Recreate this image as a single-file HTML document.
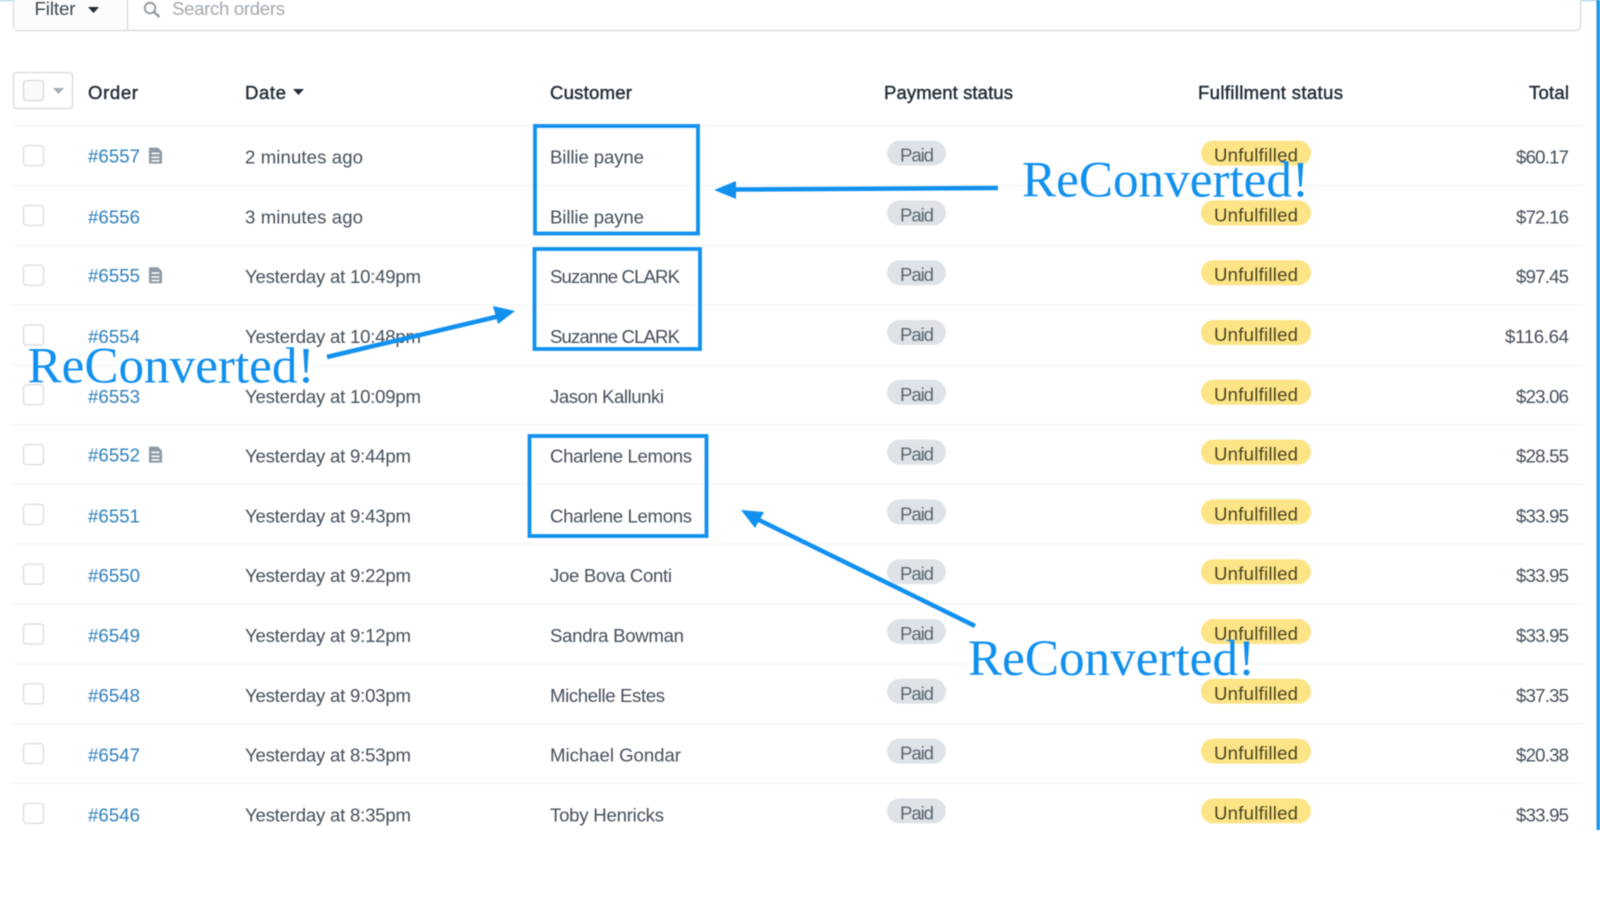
<!DOCTYPE html>
<html lang="en"><head><meta charset="utf-8"><title>Orders</title>
<style>
html,body{margin:0;padding:0;background:#fff;width:1600px;height:900px;overflow:hidden}
svg{display:block;filter:blur(.45px)}
text{font-family:"Liberation Sans",sans-serif;font-size:18.6px;fill:#454f5b}
.h{fill:#212b36;stroke:#212b36;stroke-width:.4}
.l{fill:#2f7fbc}
.p{fill:#5c6670}
.u{fill:#4a4520}
.a{font-family:"Liberation Serif",serif;font-size:51px;fill:#1190ee}
.c{fill:#fff;stroke:#dcdfe2;stroke-width:1.4}
.pp{fill:#dfe3e8}
.up{fill:#fde487}
.ln{stroke:#f3f4f6;stroke-width:1.2}
.f{fill:#8f9aa5}
</style></head><body>
<svg width="1600" height="900" viewBox="0 0 1600 900" xmlns="http://www.w3.org/2000/svg">
<rect width="1600" height="900" fill="#fff"/>
<rect x="0" y="0" width="1600" height="1.2" fill="#a8d4f0"/>
<rect x="1596.500" y="0" width="3.500" height="830" fill="#1b95ea"/>
<rect x="13.500" y="-10" width="1567" height="40.500" rx="4" fill="#fff" stroke="#d5d8dc" stroke-width="1.200"/>
<rect x="14" y="-10" width="113" height="40" fill="#fcfcfc"/>
<line x1="127.500" y1="0" x2="127.500" y2="30" stroke="#d5d8dc" stroke-width="1.200"/>
<text x="34.500" y="15" textLength="41" style="fill:#3c4650">Filter</text>
<path d="M88 7h11l-5.500 6z" fill="#212b36"/>
<circle cx="150" cy="8" r="5.300" fill="none" stroke="#8d97a1" stroke-width="1.800"/>
<path d="M154 12l5.500 5" stroke="#8d97a1" stroke-width="2.200" fill="none"/>
<text x="172" y="15" textLength="113" style="fill:#a3a9af">Search orders</text>

<rect x="13.500" y="72.500" width="59" height="36" rx="3" fill="#fff" stroke="#d6d9dd" stroke-width="1.300"/>
<rect x="23.500" y="80.500" width="20" height="20" rx="3" fill="#f9fafa" stroke="#d6d9dd" stroke-width="1.300"/>
<path d="M53 88h11l-5.500 6z" fill="#a4abb2"/>
<text class="h" x="88" y="99" textLength="50">Order</text>
<text class="h" x="245" y="99" textLength="41">Date</text>
<path d="M293 89h11l-5.500 6z" fill="#212b36"/>
<text class="h" x="550" y="99" textLength="82">Customer</text>
<text class="h" x="884" y="99" textLength="129">Payment status</text>
<text class="h" x="1198" y="99" textLength="145">Fulfillment status</text>
<text class="h" x="1529" y="99" textLength="40">Total</text>

<g transform="translate(0 .6)">
<g><line class="ln" x1="13" y1="125" x2="1583" y2="125"/><rect class="c" x="23.500" y="145" width="20" height="20" rx="3"/><text class="l" x="88" y="162" textLength="52">#6557</text><path class="f" d="M149 147h9l4 4v12h-13zM151.500 152v1.500h8V152zM151.500 156v1.500h8V156zM151.500 159.500v1.500h8v-1.500z" fill-rule="evenodd"/><text x="245" y="163" textLength="118">2 minutes ago</text><text x="550" y="163" textLength="94">Billie payne</text><rect class="pp" x="887" y="140" width="59" height="25" rx="12.500"/><text class="p" x="900" y="161" textLength="34">Paid</text><rect class="up" x="1201" y="140" width="110" height="25" rx="12.500"/><text class="u" x="1214" y="161" textLength="84">Unfulfilled</text><text x="1516" y="163" textLength="53">$60.17</text></g>

<g transform="translate(0 59.8)"><line class="ln" x1="13" y1="125" x2="1583" y2="125"/><rect class="c" x="23.500" y="145" width="20" height="20" rx="3"/><text class="l" x="88" y="163" textLength="52">#6556</text><text x="245" y="163" textLength="118">3 minutes ago</text><text x="550" y="163" textLength="94">Billie payne</text><rect class="pp" x="887" y="140" width="59" height="25" rx="12.500"/><text class="p" x="900" y="161" textLength="34">Paid</text><rect class="up" x="1201" y="140" width="110" height="25" rx="12.500"/><text class="u" x="1214" y="161" textLength="84">Unfulfilled</text><text x="1516" y="163" textLength="53">$72.16</text></g>

<g transform="translate(0 119.6)"><line class="ln" x1="13" y1="125" x2="1583" y2="125"/><rect class="c" x="23.500" y="145" width="20" height="20" rx="3"/><text class="l" x="88" y="162" textLength="52">#6555</text><path class="f" d="M149 147h9l4 4v12h-13zM151.500 152v1.500h8V152zM151.500 156v1.500h8V156zM151.500 159.500v1.500h8v-1.500z" fill-rule="evenodd"/><text x="245" y="163" textLength="176">Yesterday at 10:49pm</text><text x="550" y="163" textLength="130">Suzanne CLARK</text><rect class="pp" x="887" y="140" width="59" height="25" rx="12.500"/><text class="p" x="900" y="161" textLength="34">Paid</text><rect class="up" x="1201" y="140" width="110" height="25" rx="12.500"/><text class="u" x="1214" y="161" textLength="84">Unfulfilled</text><text x="1516" y="163" textLength="53">$97.45</text></g>

<g transform="translate(0 179.4)"><line class="ln" x1="13" y1="125" x2="1583" y2="125"/><rect class="c" x="23.500" y="145" width="20" height="20" rx="3"/><text class="l" x="88" y="163" textLength="52">#6554</text><text x="245" y="163" textLength="176">Yesterday at 10:48pm</text><text x="550" y="163" textLength="130">Suzanne CLARK</text><rect class="pp" x="887" y="140" width="59" height="25" rx="12.500"/><text class="p" x="900" y="161" textLength="34">Paid</text><rect class="up" x="1201" y="140" width="110" height="25" rx="12.500"/><text class="u" x="1214" y="161" textLength="84">Unfulfilled</text><text x="1505" y="163" textLength="64">$116.64</text></g>

<g transform="translate(0 239.2)"><line class="ln" x1="13" y1="125" x2="1583" y2="125"/><rect class="c" x="23.500" y="145" width="20" height="20" rx="3"/><text class="l" x="88" y="163" textLength="52">#6553</text><text x="245" y="163" textLength="176">Yesterday at 10:09pm</text><text x="550" y="163" textLength="114">Jason Kallunki</text><rect class="pp" x="887" y="140" width="59" height="25" rx="12.500"/><text class="p" x="900" y="161" textLength="34">Paid</text><rect class="up" x="1201" y="140" width="110" height="25" rx="12.500"/><text class="u" x="1214" y="161" textLength="84">Unfulfilled</text><text x="1516" y="163" textLength="53">$23.06</text></g>

<g transform="translate(0 299)"><line class="ln" x1="13" y1="125" x2="1583" y2="125"/><rect class="c" x="23.500" y="145" width="20" height="20" rx="3"/><text class="l" x="88" y="162" textLength="52">#6552</text><path class="f" d="M149 147h9l4 4v12h-13zM151.500 152v1.500h8V152zM151.500 156v1.500h8V156zM151.500 159.500v1.500h8v-1.500z" fill-rule="evenodd"/><text x="245" y="163" textLength="166">Yesterday at 9:44pm</text><text x="550" y="163" textLength="142">Charlene Lemons</text><rect class="pp" x="887" y="140" width="59" height="25" rx="12.500"/><text class="p" x="900" y="161" textLength="34">Paid</text><rect class="up" x="1201" y="140" width="110" height="25" rx="12.500"/><text class="u" x="1214" y="161" textLength="84">Unfulfilled</text><text x="1516" y="163" textLength="53">$28.55</text></g>

<g transform="translate(0 358.8)"><line class="ln" x1="13" y1="125" x2="1583" y2="125"/><rect class="c" x="23.500" y="145" width="20" height="20" rx="3"/><text class="l" x="88" y="163" textLength="52">#6551</text><text x="245" y="163" textLength="166">Yesterday at 9:43pm</text><text x="550" y="163" textLength="142">Charlene Lemons</text><rect class="pp" x="887" y="140" width="59" height="25" rx="12.500"/><text class="p" x="900" y="161" textLength="34">Paid</text><rect class="up" x="1201" y="140" width="110" height="25" rx="12.500"/><text class="u" x="1214" y="161" textLength="84">Unfulfilled</text><text x="1516" y="163" textLength="53">$33.95</text></g>

<g transform="translate(0 418.6)"><line class="ln" x1="13" y1="125" x2="1583" y2="125"/><rect class="c" x="23.500" y="145" width="20" height="20" rx="3"/><text class="l" x="88" y="163" textLength="52">#6550</text><text x="245" y="163" textLength="166">Yesterday at 9:22pm</text><text x="550" y="163" textLength="122">Joe Bova Conti</text><rect class="pp" x="887" y="140" width="59" height="25" rx="12.500"/><text class="p" x="900" y="161" textLength="34">Paid</text><rect class="up" x="1201" y="140" width="110" height="25" rx="12.500"/><text class="u" x="1214" y="161" textLength="84">Unfulfilled</text><text x="1516" y="163" textLength="53">$33.95</text></g>

<g transform="translate(0 478.4)"><line class="ln" x1="13" y1="125" x2="1583" y2="125"/><rect class="c" x="23.500" y="145" width="20" height="20" rx="3"/><text class="l" x="88" y="163" textLength="52">#6549</text><text x="245" y="163" textLength="166">Yesterday at 9:12pm</text><text x="550" y="163" textLength="134">Sandra Bowman</text><rect class="pp" x="887" y="140" width="59" height="25" rx="12.500"/><text class="p" x="900" y="161" textLength="34">Paid</text><rect class="up" x="1201" y="140" width="110" height="25" rx="12.500"/><text class="u" x="1214" y="161" textLength="84">Unfulfilled</text><text x="1516" y="163" textLength="53">$33.95</text></g>

<g transform="translate(0 538.2)"><line class="ln" x1="13" y1="125" x2="1583" y2="125"/><rect class="c" x="23.500" y="145" width="20" height="20" rx="3"/><text class="l" x="88" y="163" textLength="52">#6548</text><text x="245" y="163" textLength="166">Yesterday at 9:03pm</text><text x="550" y="163" textLength="115">Michelle Estes</text><rect class="pp" x="887" y="140" width="59" height="25" rx="12.500"/><text class="p" x="900" y="161" textLength="34">Paid</text><rect class="up" x="1201" y="140" width="110" height="25" rx="12.500"/><text class="u" x="1214" y="161" textLength="84">Unfulfilled</text><text x="1516" y="163" textLength="53">$37.35</text></g>

<g transform="translate(0 598)"><line class="ln" x1="13" y1="125" x2="1583" y2="125"/><rect class="c" x="23.500" y="145" width="20" height="20" rx="3"/><text class="l" x="88" y="163" textLength="52">#6547</text><text x="245" y="163" textLength="166">Yesterday at 8:53pm</text><text x="550" y="163" textLength="131">Michael Gondar</text><rect class="pp" x="887" y="140" width="59" height="25" rx="12.500"/><text class="p" x="900" y="161" textLength="34">Paid</text><rect class="up" x="1201" y="140" width="110" height="25" rx="12.500"/><text class="u" x="1214" y="161" textLength="84">Unfulfilled</text><text x="1516" y="163" textLength="53">$20.38</text></g>

<g transform="translate(0 657.8)"><line class="ln" x1="13" y1="125" x2="1583" y2="125"/><rect class="c" x="23.500" y="145" width="20" height="20" rx="3"/><text class="l" x="88" y="163" textLength="52">#6546</text><text x="245" y="163" textLength="166">Yesterday at 8:35pm</text><text x="550" y="163" textLength="114">Toby Henricks</text><rect class="pp" x="887" y="140" width="59" height="25" rx="12.500"/><text class="p" x="900" y="161" textLength="34">Paid</text><rect class="up" x="1201" y="140" width="110" height="25" rx="12.500"/><text class="u" x="1214" y="161" textLength="84">Unfulfilled</text><text x="1516" y="163" textLength="53">$33.95</text></g>
</g>

<g fill="none" stroke="#1190ee" stroke-width="3.800">
<rect x="535" y="126" width="163" height="107.500"/>
<rect x="534.500" y="249" width="165.500" height="100"/>
<rect x="529.500" y="436" width="177" height="100"/>
</g>
<g stroke="#1190ee" stroke-width="4.500" fill="none">
<path d="M732 189.500L998 188"/>
<path d="M327 357L500 316"/>
<path d="M755 518L975 626"/>
</g>
<g fill="#1190ee">
<path d="M714 190L736 181V199z"/>
<path d="M515 311L493 306L498 324z"/>
<path d="M741 510L764 512L755 528z"/>
</g>
<text class="a" x="1022" y="196.500" textLength="287" lengthAdjust="spacingAndGlyphs">ReConverted!</text>
<text class="a" x="27.500" y="382.500" textLength="287" lengthAdjust="spacingAndGlyphs">ReConverted!</text>
<text class="a" x="968" y="675" textLength="287" lengthAdjust="spacingAndGlyphs">ReConverted!</text>
</svg>
</body></html>
